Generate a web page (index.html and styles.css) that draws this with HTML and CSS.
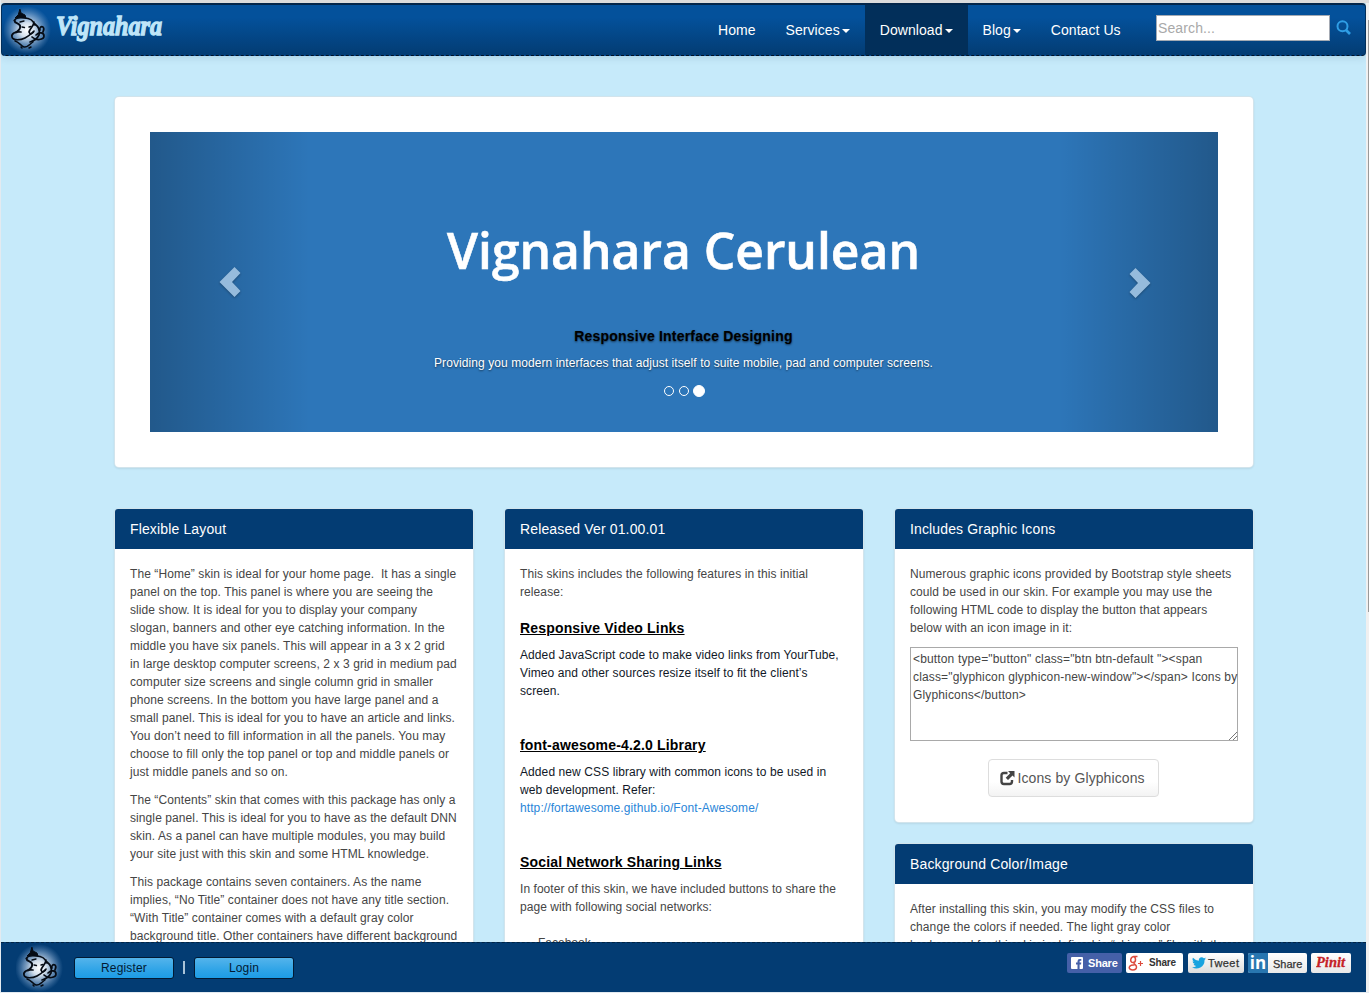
FILE: index.html
```
<!DOCTYPE html>
<html lang="en">
<head>
<meta charset="utf-8">
<title>Vignahara</title>
<link rel="stylesheet" href="styles.css">
</head>
<body>
<svg class="defs" width="0" height="0">
  <defs>
    <radialGradient id="glow"><stop offset="0" stop-color="#fff"/><stop offset=".3" stop-color="#dfe8f2" stop-opacity=".95"/><stop offset=".65" stop-color="#96b4d5" stop-opacity=".6"/><stop offset="1" stop-color="#6b96c4" stop-opacity="0"/></radialGradient>
    <symbol id="ganesha" viewBox="0 0 48 48">
      <circle cx="23" cy="24" r="24" fill="url(#glow)"/>
      <g fill="none" stroke="#050b14" stroke-width="1.7" stroke-linecap="round" stroke-linejoin="round">
        <path d="M16 3.500l1 3.500 4 2 1 3-6-1-5 1 3-3z" fill="#050b14" stroke-width="1"/>
        <path d="M10.500 14.500c1-3 6-3 10-2.500 5 0 9 3 10.500 7"/>
        <path d="M10.500 14.500c0 3 4 2 5.500 5 1 3-1 5-4 7" stroke-width="2"/>
        <path d="M16 16l4-1M18 21l2.500.5M25 21l2-.5" stroke-width="1.300"/>
        <path d="M30 16c0 4-4 6-5 10 1 3 4 2 5-1"/>
        <path d="M31 18c4 3 5 7 4 11-2 4-5 6-9 7"/>
        <path d="M17 26c-6-1-10 2-9 5 1 4 9 3 13 1 4-2 6-4 8-6M28 31c4 4 12 3 12-1 0-4-5-4-8-1"/>
        <path d="M36 24c-1-2 1-4 3-3 2 2 0 4 0 5"/>
        <path d="M11 35c4 1 6 5 9 6s6-3 9-5M17 41l1 1M25 42l2-1" stroke-width="1.500"/>
      </g>
    </symbol>
  </defs>
</svg>
<div class="frame">
  <header class="navbar">
    <svg class="emblem" width="48" height="48"><use href="#ganesha"/></svg>
    <svg class="brand" width="116" height="40" role="img"><text x="6" y="26" textLength="106" lengthAdjust="spacingAndGlyphs">Vignahara</text></svg>
    <nav class="menu">
      <a>Home</a>
      <a>Services<i class="caret"></i></a>
      <a class="active">Download<i class="caret"></i></a>
      <a>Blog<i class="caret"></i></a>
      <a>Contact Us</a>
    </nav>
    <div class="search">Search...</div>
    <svg class="lens" width="16" height="16" viewBox="0 0 16 16" fill="none" stroke="#2f9ee6" stroke-width="2"><circle cx="6.500" cy="6.300" r="5"/><path d="M10 10l4 4" stroke-width="2.600"/></svg>
  </header>

  <main>
    <section class="hero">
      <div class="carousel">
        <svg class="arrow" width="22" height="32" viewBox="0 0 22 32"><path d="M15.500 1L21.500 7L13 16L21.500 25L15.500 31L.5 16z"/></svg>
        <div class="slide">
          <svg class="title" width="490" height="70"><text x="8" y="51" textLength="473" lengthAdjust="spacingAndGlyphs">Vignahara Cerulean</text></svg>
          <h4>Responsive Interface Designing</h4>
          <p>Providing you modern interfaces that adjust itself to suite mobile, pad and computer screens.</p>
          <div class="dots"><i></i><i></i><i class="on"></i></div>
        </div>
        <svg class="arrow next" width="22" height="32" viewBox="0 0 22 32"><path d="M6.500 1L.5 7L9 16L.5 25L6.500 31L21.500 16z"/></svg>
      </div>
    </section>

    <div class="columns">
      <section class="panel">
        <h3>Flexible Layout</h3>
        <div class="body">
          <p>The “Home” skin is ideal for your home page.&nbsp; It has a single<br>panel on the top. This panel is where you are seeing the<br>slide show. It is ideal for you to display your company<br>slogan, banners and other eye catching information. In the<br>middle you have six panels. This will appear in a 3 x 2 grid<br>in large desktop computer screens, 2 x 3 grid in medium pad<br>computer size screens and single column grid in smaller<br>phone screens. In the bottom you have large panel and a<br>small panel. This is ideal for you to have an article and links.<br>You don’t need to fill information in all the panels. You may<br>choose to fill only the top panel or top and middle panels or<br>just middle panels and so on.</p>
          <p>The “Contents” skin that comes with this package has only a<br>single panel. This is ideal for you to have as the default DNN<br>skin. As a panel can have multiple modules, you may build<br>your site just with this skin and some HTML knowledge.</p>
          <p>This package contains seven containers. As the name<br>implies, “No Title” container does not have any title section.<br>“With Title” container comes with a default gray color<br>background title. Other containers have different background</p>
        </div>
      </section>
      <section class="panel">
        <h3>Released Ver 01.00.01</h3>
        <div class="body">
          <p class="intro">This skins includes the following features in this initial<br>release:</p>
          <h4>Responsive Video Links</h4>
          <p class="feature">Added JavaScript code to make video links from YourTube,<br>Vimeo and other sources resize itself to fit the client’s<br>screen.</p>
          <h4>font-awesome-4.2.0 Library</h4>
          <p class="feature">Added new CSS library with common icons to be used in<br>web development. Refer:<br><a>http://fortawesome.github.io/Font-Awesome/</a></p>
          <h4>Social Network Sharing Links</h4>
          <p class="networks">In footer of this skin, we have included buttons to share the<br>page with following social networks:</p>
          <div class="list">Facebook</div>
        </div>
      </section>
      <div class="stack">
        <section class="panel icons">
          <h3>Includes Graphic Icons</h3>
          <div class="body">
            <p>Numerous graphic icons provided by Bootstrap style sheets<br>could be used in our skin. For example you may use the<br>following HTML code to display the button that appears<br>below with an icon image in it:</p>
            <div class="code">&lt;button type="button" class="btn btn-default "&gt;&lt;span<br>class="glyphicon glyphicon-new-window"&gt;&lt;/span&gt; Icons by<br>Glyphicons&lt;/button&gt;
              <svg class="grip" width="8" height="8" stroke="#777" stroke-width="1"><path d="M0 8L8 0M4 8L8 4"/></svg>
            </div>
            <div class="button"><svg width="15" height="15" viewBox="0 0 15 15"><path d="M7.500 2H4Q1.500 2 1.500 4.500V10.500Q1.500 13 4 13H9.500Q12 13 12 10.500V9" fill="none" stroke="#444" stroke-width="2.400"/><path d="M8 0h6.500v6.500l-2-2L8 9 5.700 6.700 10.200 2.200z" fill="#444"/></svg><span>Icons by Glyphicons</span></div>
          </div>
        </section>
        <section class="panel">
          <h3>Background Color/Image</h3>
          <div class="body">
            <p>After installing this skin, you may modify the CSS files to<br>change the colors if needed. The light gray color<br>background for this skin is defined in “skin.css” file with the</p>
          </div>
        </section>
      </div>
    </div>
  </main>

  <footer class="bar">
    <svg class="emblem" width="48" height="48"><use href="#ganesha"/></svg>
    <a class="account">Register</a><span class="sep"></span><a class="account">Login</a>
    <div class="share">
      <a class="fb"><svg width="12" height="12"><rect width="12" height="12" rx="1" fill="#fff"/><path d="M6.500 12V7.500H5V5.600H6.500V4.200Q6.500 2 8.800 2H10.300V3.800H9.300Q8.600 3.800 8.600 4.500V5.600H10.300L10 7.500H8.600V12z" fill="#4560a8"/></svg><b>Share</b></a>
      <a class="gp"><svg width="17" height="17" fill="none" stroke="#dc4b3e" stroke-width="1.500"><path d="M9.500 1.500H6.500C2 1.500 1.500 7.500 5 7.500 8.500 7.500 8 2 5.500 1.500M6 7.500C5 9 8.500 9.500 8.500 12 8.500 16 1 15.500 1.200 12.500 1.300 10 5 9.800 6.500 10"/><path d="M10 8.500H15M12.500 6V11" stroke-width="1.200"/></svg><b>Share</b></a>
      <a class="tw"><svg width="14" height="12" viewBox="0 0 24 20"><path d="M24 2.400a10 10 0 0 1-2.800.8A5 5 0 0 0 23.300.5a10 10 0 0 1-3.100 1.200A4.900 4.900 0 0 0 11.800 6 14 14 0 0 1 1.700 1 4.900 4.900 0 0 0 3.200 7.500 5 5 0 0 1 1 6.900 4.900 4.900 0 0 0 4.900 11.700a5 5 0 0 1-2.200.1 4.900 4.900 0 0 0 4.600 3.400A9.900 9.900 0 0 1 0 17.200 14 14 0 0 0 21.500 5 10 10 0 0 0 24 2.400z" fill="#19a3df"/></svg><span>Tweet</span></a>
      <a class="li"><i>in</i><span>Share</span></a>
      <a class="pin"><svg width="30" height="18"><text x="0" y="13" textLength="29" lengthAdjust="spacingAndGlyphs">Pinit</text></svg></a>
    </div>
  </footer>
  <div class="scroll"><i></i></div>
</div>
</body>
</html>
```
FILE: styles.css
```
* { box-sizing: border-box; }
body { margin: 0; width: 1369px; height: 993px; overflow: hidden; background: #e3eaf0; font-family: "Liberation Sans", Arial, sans-serif; font-size: 12px; line-height: 18px; color: #454545; }
h3, h4, p { margin: 0; }
i { font-style: normal; }
.defs { position: absolute; }
.frame { position: relative; height: 992px; margin-left: 1px; width: 1368px; background: #c6eafa; border-top: 3px solid #dcdcdc; overflow: hidden; }
.navbar { position: relative; display: flex; width: 1365px; height: 53px; background: linear-gradient(#04519b, #04519b 25%, #033c73); border: 1px solid #022f5a; border-top: 2px solid #04264a; border-bottom: 1px dashed #021226; border-radius: 4px; box-shadow: 0 1px 8px rgba(0,50,90,.15); }
.navbar .emblem { margin: 1px 0 0 2px; }
.brand { margin-top: 4px; margin-left: -2px; overflow: visible; }
.brand text { font: italic bold 28px "Liberation Serif", serif; fill: #bfe5f8; stroke: #bfe5f8; stroke-width: 1.3px; }
.menu { display: flex; margin-left: 537px; }
.menu a { height: 50px; padding: 15px 15px; font-size: 14px; line-height: 20px; letter-spacing: .06px; color: #fff; white-space: nowrap; }
.caret { display: inline-block; margin-left: 2px; vertical-align: middle; border-top: 4px solid #fff; border-left: 4px solid transparent; border-right: 4px solid transparent; }
.menu .active { background: #022f5a; }
.search { position: absolute; left: 1154px; top: 10px; width: 174px; height: 26px; padding: 0 1px; background: #fff; border: 1px solid #a4aab3; font-size: 14px; line-height: 24px; letter-spacing: .12px; color: #a9a9a9; }
.lens { position: absolute; left: 1334px; top: 15px; }
main { width: 1138px; margin-left: 114px; }
.hero { margin-top: 41px; height: 370px; padding: 35px; background: #fff; border-radius: 4px; box-shadow: 0 0 0 1px #d2e4ec, 0 1px 2px 1px rgba(0,0,0,.08); }
.carousel { display: flex; justify-content: space-between; width: 1068px; height: 300px; padding: 0 67px 0 69px; background: linear-gradient(90deg, rgba(0,0,0,.25), transparent 160px, transparent 908px, rgba(0,0,0,.25)), #2d76b9; }
.arrow { margin-top: 134px; fill: #96bbdc; filter: drop-shadow(0 1px 1px rgba(0,0,0,.3)); }
.arrow.next { margin-top: 135px; }
.slide { display: flex; flex-direction: column; align-items: center; width: 560px; padding-right: 3px; }
.title { margin-top: 86px; overflow: visible; }
.title text { font: 600 51px "Open Sans", sans-serif; fill: #fff; stroke: #fff; stroke-width: .6px; }
.slide h4 { margin-top: 39px; font-size: 14px; line-height: 18px; letter-spacing: .2px; color: #000; text-shadow: 0 1px 2px rgba(0,0,0,.6); white-space: nowrap; }
.slide p { margin-top: 9px; letter-spacing: .08px; color: #fff; text-shadow: 0 1px 2px rgba(0,0,0,.6); white-space: nowrap; }
.dots { display: flex; align-items: center; height: 12px; margin: 13px 0 0 2px; }
.dots i { width: 10px; height: 10px; margin-right: 5px; border: 1px solid #fff; border-radius: 50%; }
.dots .on { width: 12px; height: 12px; margin: 0 0 0 -1px; background: #fff; }
.columns { display: grid; grid-template-columns: repeat(3, 358px); gap: 32px; align-items: start; margin-top: 42px; }
.panel { background: #fff; border-radius: 4px; box-shadow: 0 0 0 1px #d2e4ec, 0 1px 2px 1px rgba(0,0,0,.08); }
.panel h3 { height: 40px; padding: 0 15px; border-radius: 3px 3px 0 0; background: #033c73; color: #fff; font-size: 14px; font-weight: normal; line-height: 40px; letter-spacing: .14px; }
.body { padding: 16px 15px; }
.body p { margin-bottom: 10px; white-space: nowrap; letter-spacing: .09px; }
.body h4 { font-size: 14px; line-height: 18px; letter-spacing: .17px; color: #000; text-decoration: underline; margin-bottom: 9px; }
.body .intro { margin-bottom: 18px; }
.body .feature { margin-bottom: 36px; color: #111827; }
.body .feature a { color: #2a86d8; }
.body .networks { margin-bottom: 18px; letter-spacing: .05px; }
.list { padding-left: 18px; }
.icons { height: 313px; margin-bottom: 22px; }
.icons .body { display: flex; flex-direction: column; }
.code { position: relative; width: 328px; height: 94px; padding: 2px; border: 1px solid #a9a9a9; white-space: nowrap; letter-spacing: .15px; }
.grip { position: absolute; right: 0; bottom: 0; }
.button { display: flex; align-items: center; align-self: center; gap: 3px; width: 171px; height: 38px; margin: 18px 2px 0 0; padding-left: 12px; border: 1px solid #ddd; border-radius: 4px; background: linear-gradient(#fff, #fff 60%, #f3f3f3); font-size: 14px; color: #555; white-space: nowrap; }
.button svg { flex: none; margin-left: -1px; }
.button span { letter-spacing: .1px; }
.bar { position: absolute; left: 0; top: 939px; display: flex; align-items: flex-start; width: 1365px; height: 50px; background: #033c73; border-top: 1px dashed #022444; }
.bar .emblem { margin: 1px 0 0 15px; }
.account { width: 100px; height: 22px; margin: 14px 0 0 10px; border: 1px solid #021a33; border-radius: 3px; background: linear-gradient(#54b4eb, #2fa4e7 60%, #1d9ce5); color: #021a33; text-align: center; line-height: 21px; letter-spacing: .15px; }
.sep { width: 2px; height: 13px; margin: 18px 0 0 9px; background: #a9c3d8; }
.sep + .account { margin-left: 9px; }
.share { display: flex; position: absolute; left: 1066px; top: 10px; gap: 4px; font-size: 11px; color: #333; }
.share a { display: flex; align-items: center; height: 20px; border-radius: 2px; background: #fff; line-height: 20px; }
.share .fb { width: 55px; padding-left: 4px; gap: 5px; background: #4560a8; color: #fff; letter-spacing: -.2px; }
.share .gp { width: 57px; padding-left: 2px; gap: 4px; font-size: 10px; letter-spacing: -.2px; }
.share .tw { width: 56px; margin-left: 1px; padding-left: 4px; gap: 2px; background: linear-gradient(#fff, #ddd); letter-spacing: .4px; -webkit-text-stroke: .25px #333; }
.share .li { width: 59px; background: linear-gradient(#fff, #e9e9e9); -webkit-text-stroke: .25px #333; }
.li i { width: 20px; height: 20px; margin-right: 5px; border-radius: 2px 0 0 2px; background: #2876b0; color: #fff; font: bold 17px/19px "Open Sans", sans-serif; text-align: center; -webkit-text-stroke: 0; }
.li span { padding-top: 2px; }
.share .pin { width: 40px; padding-left: 5px; background: linear-gradient(#fff, #e8e8e8); }
.pin text { font: italic bold 14px "Liberation Serif", serif; fill: #c51f27; stroke: #c51f27; stroke-width: .3px; }
.scroll { position: absolute; right: 0; top: 0; width: 3px; height: 989px; background: #f0f0f0; }
.scroll i { display: block; width: 1px; height: 592px; margin: 17px 0 0 2px; background: #999; }
```
